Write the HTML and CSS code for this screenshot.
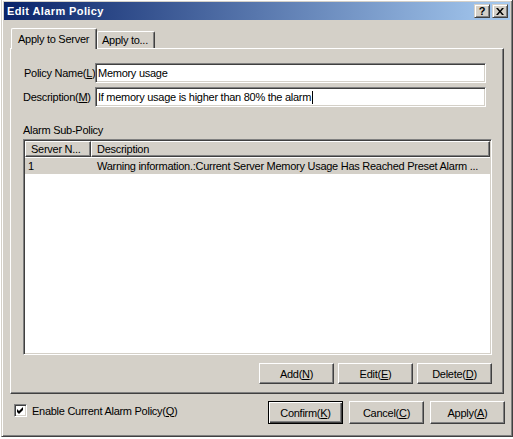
FILE: index.html
```html
<!DOCTYPE html>
<html>
<head>
<meta charset="utf-8">
<link rel="stylesheet" href="styles.css">
</head>
<body>
<div class="window">
  <div class="titlebar">
    <span class="title">Edit Alarm Policy</span>
    <div class="capbtns">
      <span class="capbtn help">?</span>
      <span class="capbtn close"><svg width="8" height="7" viewBox="0 0 8 7"><path d="M0 0h2l2 2.4 2-2.4h2L5 3.5 8 7H6L4 4.6 2 7H0l3-3.5z" fill="#000"/></svg></span>
    </div>
  </div>
  <div class="client">
    <div class="tabs">
      <div class="tab active">Apply to Server</div>
      <div class="tab second">Apply to...</div>
    </div>
    <div class="pane">
      <div class="field">
        <span class="label">Policy Name(<u>L</u>)</span>
        <div class="input">Memory usage</div>
      </div>
      <div class="field">
        <span class="label">Description(<u>M</u>)</span>
        <div class="input">If memory usage is higher than 80% the alarm<span class="caret"></span></div>
      </div>
      <div class="group-label">Alarm Sub-Policy</div>
      <div class="list">
        <div class="list-head">
          <div class="hcell c1">Server N...</div>
          <div class="hcell c2">Description</div>
        </div>
        <div class="list-row selected">
          <div class="cell c1">1</div>
          <div class="cell c2">Warning information.:Current Server Memory Usage Has Reached Preset Alarm ...</div>
        </div>
      </div>
      <div class="list-btns">
        <div class="btn small">Add(<u>N</u>)</div>
        <div class="btn small">Edit(<u>E</u>)</div>
        <div class="btn small">Delete(<u>D</u>)</div>
      </div>
    </div>
    <div class="footer">
      <div class="check">
        <span class="box"><svg width="7" height="7" viewBox="0 0 7 7"><path d="M0 2L2 4 6 0V3L2 7 0 5z" fill="#000"/></svg></span>
        <span>Enable Current Alarm Policy(<u>Q</u>)</span>
      </div>
      <div class="dlg-btns">
        <div class="btn default">Confirm(<u>K</u>)</div>
        <div class="btn">Cancel(<u>C</u>)</div>
        <div class="btn">Apply(<u>A</u>)</div>
      </div>
    </div>
  </div>
</div>
</body>
</html>
```

FILE: styles.css
```css
html, body {
  margin: 0;
  padding: 0;
  background: #ffffff;
}
body {
  font-family: "Liberation Sans", Arial, sans-serif;
  font-size: 11px;
  letter-spacing: -0.27px;
  color: #000;
  overflow: hidden;
}
u {
  text-decoration: underline;
  text-underline-offset: 1px;
}
.window {
  width: 512px;
  height: 438px;
  box-sizing: border-box;
  margin: -1px 0 0 1px;
  background: #d4d0c8;
  border: 1px solid;
  border-color: #d4d0c8 #404040 #404040 #d4d0c8;
  box-shadow: inset 1px 1px #ffffff, inset -1px -1px #808080;
  padding: 2px;
  display: flex;
  flex-direction: column;
}
.titlebar {
  height: 18px;
  flex: none;
  background: linear-gradient(to right, #0a246a, #a6caf0);
  display: flex;
  align-items: center;
  justify-content: space-between;
  padding: 0 2px 0 3px;
}
.title {
  color: #fff;
  font-weight: bold;
  font-size: 11px;
  letter-spacing: 0.4px;
}
.capbtns {
  display: flex;
  gap: 2px;
}
.capbtn {
  width: 16px;
  height: 14px;
  box-sizing: border-box;
  background: #d4d0c8;
  border: 1px solid;
  border-color: #d4d0c8 #404040 #404040 #d4d0c8;
  box-shadow: inset 1px 1px #ffffff, inset -1px -1px #808080;
  display: flex;
  align-items: center;
  justify-content: center;
  font-weight: bold;
  font-size: 11px;
  line-height: 12px;
  letter-spacing: 0;
}
.help {
  padding-bottom: 1px;
}
.client {
  flex: 1;
  padding: 8px 6px 0 6px;
  display: flex;
  flex-direction: column;
}
.tabs {
  height: 20px;
  display: flex;
  align-items: flex-end;
  margin-left: 1px;
  position: relative;
  z-index: 1;
}
.tab {
  height: 17px;
  box-sizing: border-box;
  border-left: 1px solid #ffffff;
  border-top: 1px solid #ffffff;
  border-right: 1px solid #404040;
  box-shadow: inset -1px 0 #808080;
  border-radius: 2px 2px 0 0;
  background: #d4d0c8;
  line-height: 14px;
  white-space: nowrap;
}
.tab.active {
  height: 21px;
  margin-bottom: -1px;
  width: 86px;
  padding: 3px 0 0 6px;
  line-height: 15px;
}
.tab.second {
  width: 58px;
  padding: 1px 0 0 4px;
}
.pane {
  height: 346px;
  box-sizing: border-box;
  border-left: 1px solid #ffffff;
  border-top: 1px solid #ffffff;
  border-right: 1px solid #404040;
  border-bottom: 1px solid #404040;
  box-shadow: inset -1px -1px #808080;
  padding: 14px 0 9px 12px;
  display: flex;
  flex-direction: column;
}
.field {
  display: flex;
  align-items: center;
  height: 20px;
}
.field + .field {
  margin-top: 4px;
}
.label {
  width: 72px;
  flex: none;
  padding-left: 1px;
  box-sizing: border-box;
  white-space: nowrap;
}
.field:nth-child(2) .label {
  padding-left: 0;
}
.input {
  width: 391px;
  height: 20px;
  box-sizing: border-box;
  background: #fff;
  border: 1px solid;
  border-color: #808080 #ffffff #ffffff #808080;
  box-shadow: inset 1px 1px #404040, inset -1px -1px #d4d0c8;
  padding: 0 2px 0 2px;
  line-height: 18px;
  white-space: nowrap;
  display: flex;
  align-items: center;
}
.caret {
  display: inline-block;
  width: 1px;
  height: 13px;
  background: #000;
  margin-left: 1px;
}
.group-label {
  margin-top: 17px;
  height: 13px;
  line-height: 13px;
}
.list {
  margin-top: 2px;
  width: 469px;
  height: 216px;
  box-sizing: border-box;
  background: #fff;
  border: 1px solid;
  border-color: #808080 #ffffff #ffffff #808080;
  box-shadow: inset 1px 1px #404040, inset -1px -1px #d4d0c8;
  padding: 1px;
  display: flex;
  flex-direction: column;
}
.list-head {
  display: flex;
  height: 16px;
}
.hcell {
  box-sizing: border-box;
  height: 16px;
  background: #d4d0c8;
  border-left: 1px solid #ffffff;
  border-top: 1px solid #ffffff;
  border-right: 1px solid #404040;
  border-bottom: 1px solid #404040;
  box-shadow: inset -1px -1px #808080;
  line-height: 14px;
  padding-left: 5px;
  white-space: nowrap;
}
.hcell.c1 {
  width: 66px;
}
.hcell.c2 {
  flex: 1;
}
.list-row {
  display: flex;
  height: 16px;
  line-height: 16px;
  margin-top: 1px;
}
.list-row.selected {
  background: #d4d0c8;
}
.cell {
  white-space: nowrap;
  overflow: hidden;
}
.cell.c1 {
  width: 66px;
  padding-left: 3px;
  box-sizing: border-box;
}
.cell.c2 {
  flex: 1;
  padding-left: 6px;
}
.list-btns {
  width: 469px;
  margin-top: 8px;
  display: flex;
  justify-content: flex-end;
  gap: 4px;
}
.btn {
  width: 75px;
  height: 23px;
  box-sizing: border-box;
  background: #d4d0c8;
  border: 1px solid;
  border-color: #ffffff #404040 #404040 #ffffff;
  box-shadow: inset -1px -1px #808080;
  display: flex;
  align-items: center;
  justify-content: center;
  white-space: nowrap;
}
.btn.small {
  height: 21px;
}
.btn.default {
  border: 1px solid #000;
  box-shadow: inset 1px 1px #ffffff, inset -1px -1px #404040, inset -2px -2px #808080;
}
.footer {
  margin-top: 7px;
  margin-right: -1px;
  display: flex;
  justify-content: space-between;
  align-items: flex-start;
}
.check {
  display: flex;
  align-items: center;
  gap: 5px;
  margin-left: 4px;
  margin-top: 3px;
  height: 13px;
}
.box {
  width: 13px;
  height: 13px;
  box-sizing: border-box;
  background: #fff;
  border: 1px solid;
  border-color: #808080 #ffffff #ffffff #808080;
  box-shadow: inset 1px 1px #404040, inset -1px -1px #d4d0c8;
  display: flex;
  align-items: center;
  justify-content: center;
}
.dlg-btns {
  display: flex;
  gap: 6px;
}
```
